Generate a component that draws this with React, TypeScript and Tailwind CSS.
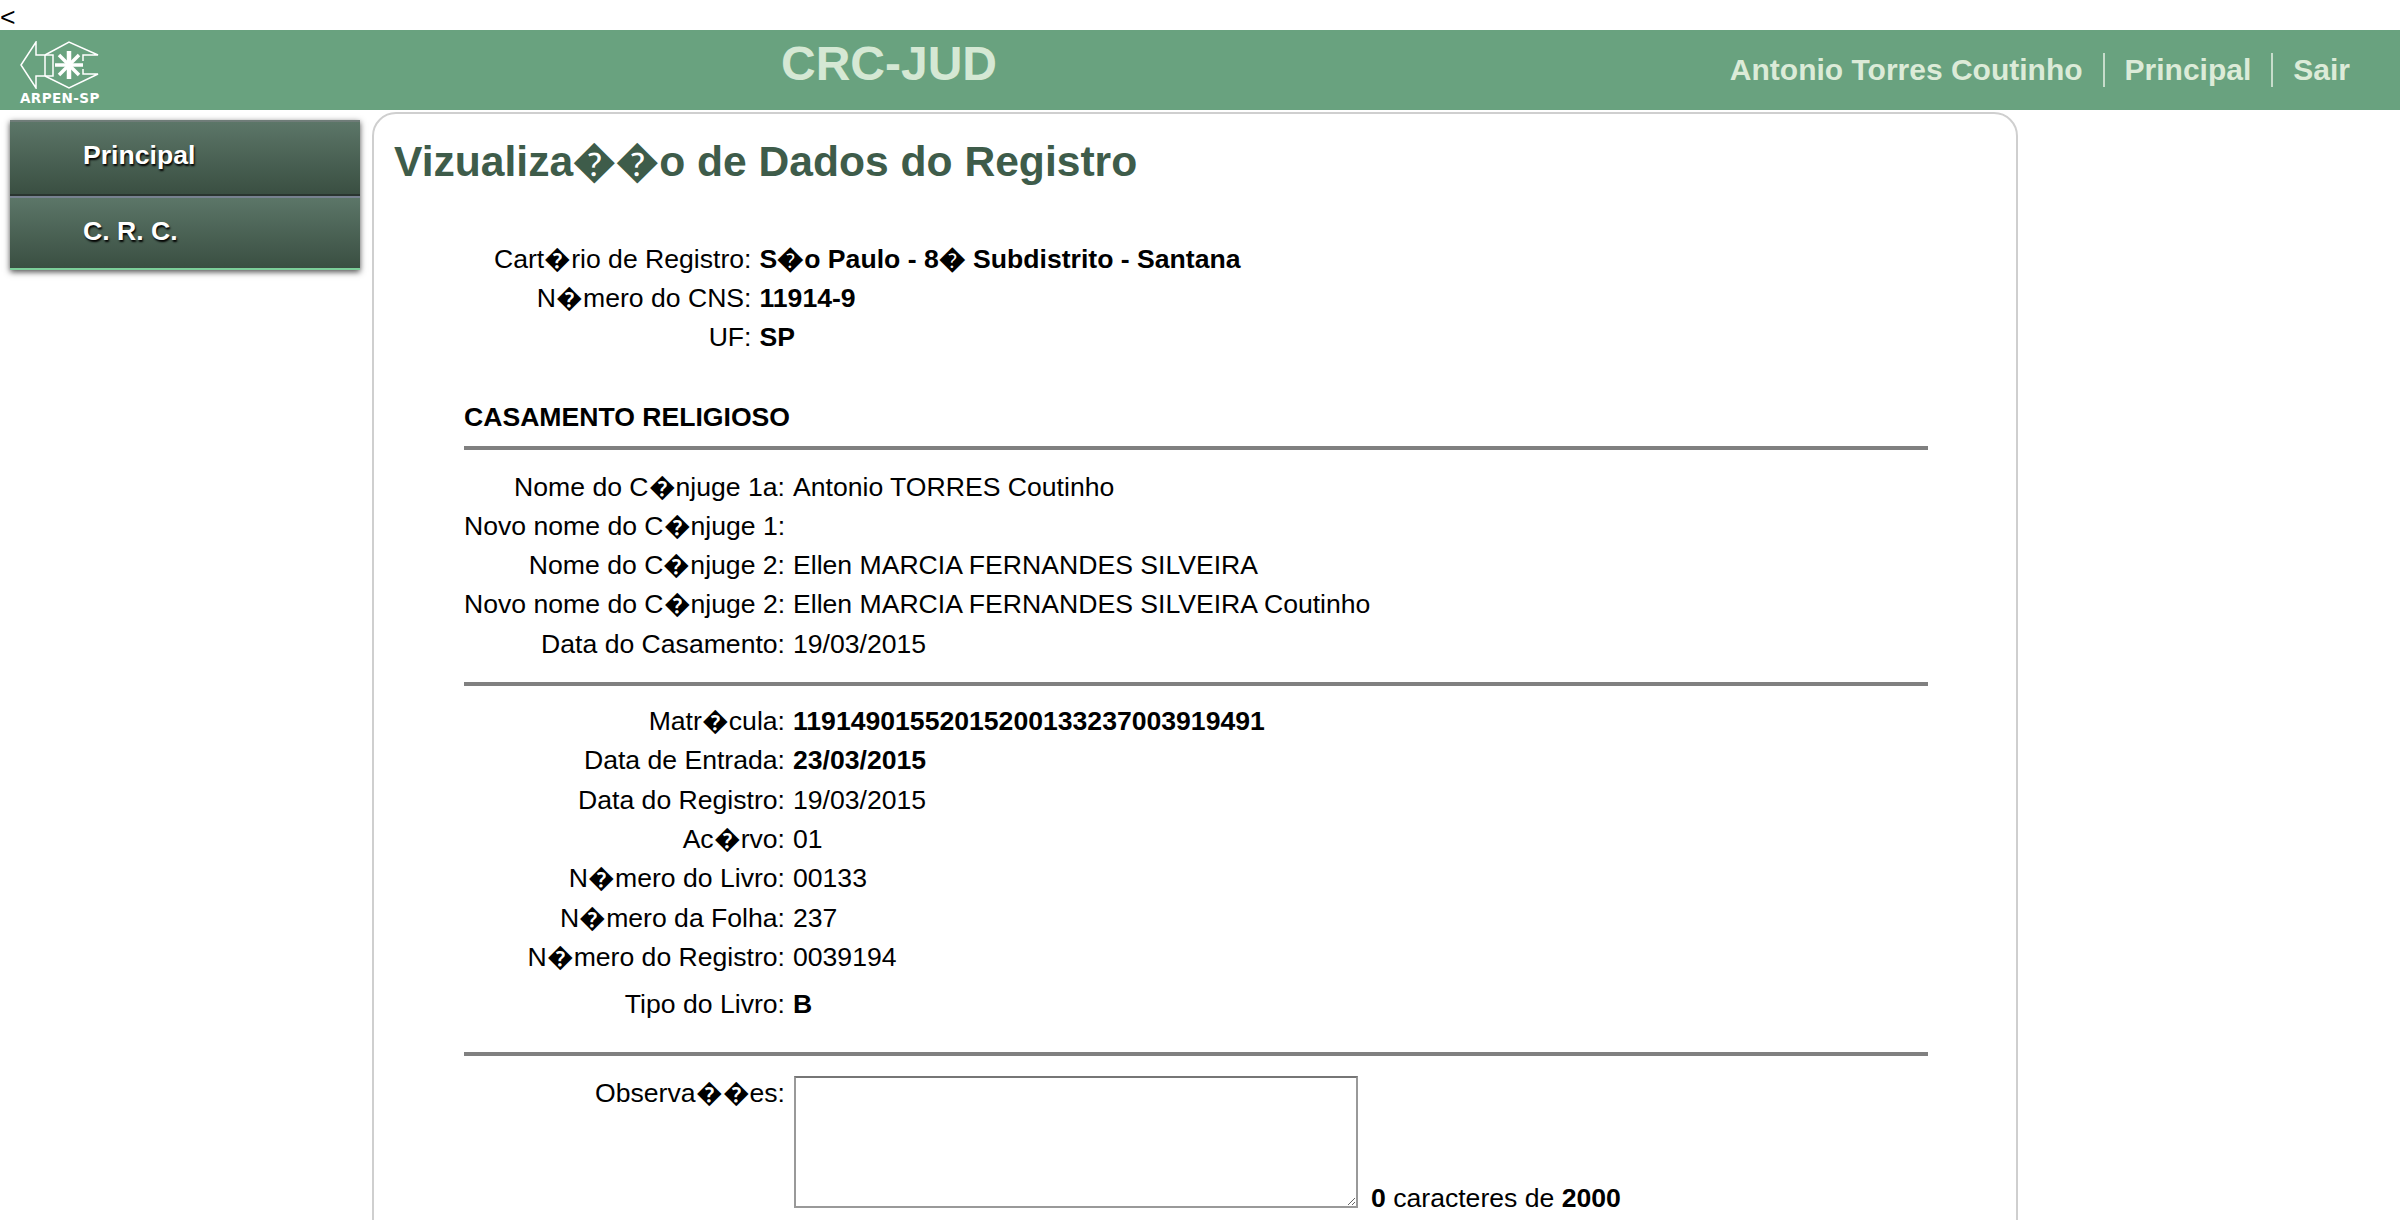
const labelFont = { fontFamily: '"Liberation Sans", Arial, sans-serif' };

type Row = { label: string; value: string; bold?: boolean; cls?: string };

const registryRows: Row[] = [
  { label: "Cart\uFFFDrio de Registro:", value: "S\uFFFDo Paulo - 8\uFFFD Subdistrito - Santana", bold: true },
  { label: "N\uFFFDmero do CNS:", value: "11914-9", bold: true },
  { label: "UF:", value: "SP", bold: true },
];

const spouseRows: Row[] = [
  { label: "Nome do C\uFFFDnjuge 1a:", value: "Antonio TORRES Coutinho" },
  { label: "Novo nome do C\uFFFDnjuge 1:", value: "" },
  { label: "Nome do C\uFFFDnjuge 2:", value: "Ellen MARCIA FERNANDES SILVEIRA" },
  { label: "Novo nome do C\uFFFDnjuge 2:", value: "Ellen MARCIA FERNANDES SILVEIRA Coutinho" },
  { label: "Data do Casamento:", value: "19/03/2015" },
];

const bookRows: Row[] = [
  { label: "Matr\uFFFDcula:", value: "11914901552015200133237003919491", bold: true },
  { label: "Data de Entrada:", value: "23/03/2015", bold: true },
  { label: "Data do Registro:", value: "19/03/2015" },
  { label: "Ac\uFFFDrvo:", value: "01" },
  { label: "N\uFFFDmero do Livro:", value: "00133" },
  { label: "N\uFFFDmero da Folha:", value: "237" },
  { label: "N\uFFFDmero do Registro:", value: "0039194" },
  { label: "Tipo do Livro:", value: "B", bold: true, cls: "mt-2" },
];

function Logo() {
  return (
    <svg width="80" height="48" viewBox="0 0 80 48" fill="none" stroke="white" strokeWidth="1.5">
      <path d="M1 24 L16 1 V14 H25 V35 H16 V47 Z" />
      <path d="M25 14 L49 1 L78 14 H63 V20 M25 35 L49 47 L78 33 H63 V28" />
      <path d="M25 14 H33 V35 H25" />
      <g strokeWidth="4.5">
        <path d="M49 10 V38" />
        <path d="M35 24 H63" strokeWidth="3.5" />
        <path d="M39 14 L59 34 M59 14 L39 34" strokeWidth="3.5" />
      </g>
    </svg>
  );
}

function DataRows({ rows, labelWidth }: { rows: Row[]; labelWidth: string }) {
  return (
    <div className="flex flex-col">
      {rows.map((row) => (
        <div key={row.label} className={`flex h-[39.3px] items-center gap-2 ${row.cls ?? ""}`}>
          <span className={`${labelWidth} shrink-0 text-right whitespace-nowrap`}>{row.label}</span>
          <span className={row.bold ? "font-bold" : ""}>{row.value}</span>
        </div>
      ))}
    </div>
  );
}

export default function App() {
  return (
    <div className="h-[1220px] overflow-hidden bg-white text-[26.6px] leading-[30px] text-black" style={labelFont}>
      <div className="h-[30px] leading-[34px]">&lt;</div>

      {/* Header */}
      <header className="flex h-[80px] items-center bg-[#69a27f] text-[#dcebd8]">
        <div className="flex w-[781px] shrink-0 flex-col pl-[20px] pt-[6px]">
          <Logo />
          <span className="mt-[1px] text-[13.5px] leading-[16px] font-bold tracking-[0.4px] text-white [font-family:'DejaVu_Sans',sans-serif]">
            ARPEN-SP
          </span>
        </div>
        <h1 className="-mt-[12px] text-[48px] leading-none font-bold text-[#d5e8d4]">CRC-JUD</h1>
        <nav className="ml-auto flex items-center pr-[50px] text-[30px] leading-[34px] font-bold">
          <span className="border-r-2 border-[#c7dccb] pr-5">Antonio Torres Coutinho</span>
          <span className="border-r-2 border-[#c7dccb] px-5">Principal</span>
          <span className="pl-5">Sair</span>
        </nav>
      </header>

      <div className="flex items-start">
        {/* Sidebar */}
        <aside className="mt-[10px] ml-[10px] w-[350px] shrink-0 shadow-[0_2px_6px_rgba(0,0,0,0.7)]">
          <div className="h-[76px] border-t-2 border-b-2 border-t-[#6f7c78] border-b-[#2a3530] bg-gradient-to-b from-[#5c7668] to-[#3a4f42] pt-[15px] pl-[73px] text-[26.6px] leading-[36px] font-bold text-white [text-shadow:1px_2px_2px_#000]">
            Principal
          </div>
          <div className="h-[74px] border-t-2 border-b-2 border-t-[#778290] border-b-[#7ccf9a] bg-gradient-to-b from-[#5c7668] to-[#3a4f42] pt-[15px] pl-[73px] text-[26.6px] leading-[36px] font-bold text-white [text-shadow:1px_2px_2px_#000]">
            C. R. C.
          </div>
        </aside>

        {/* Main panel */}
        <main className="mt-[2px] ml-[12px] h-[1200px] w-[1646px] rounded-[24px] border-2 border-[#cfcfcf] pt-[23px] pl-[20px]">
          <h2 className="text-[42.6px] leading-[48px] font-bold text-[#3e5c4a]">Vizualiza{"\uFFFD\uFFFD"}o de Dados do Registro</h2>

          <div className="mt-[54px] ml-[70px]">
            <DataRows rows={registryRows} labelWidth="w-[287.5px]" />
          </div>

          <div className="mt-[45px] ml-[70px] w-[1464px]">
            <div className="font-bold">CASAMENTO RELIGIOSO</div>
            <hr className="mt-[14px] mb-[17px] h-[4px] border-0 bg-[#808080]" />
            <DataRows rows={spouseRows} labelWidth="w-[321px]" />
            <hr className="mt-[19px] mb-[15px] h-[4px] border-0 bg-[#808080]" />
            <DataRows rows={bookRows} labelWidth="w-[321px]" />
            <hr className="mt-[28px] mb-[20px] h-[4px] border-0 bg-[#808080]" />
            <div className="flex items-start gap-2">
              <span className="w-[321px] shrink-0 pt-[2px] text-right">Observa{"\uFFFD\uFFFD"}es:</span>
              <textarea className="ml-[1px] h-[132px] w-[564px] shrink-0 rounded-none border-2 border-[#999999] border-t-[#767676] bg-white" />
              <span className="mt-[107px] ml-[5px]">
                <b>0</b> caracteres de <b>2000</b>
              </span>
            </div>
          </div>
        </main>
      </div>
    </div>
  );
}
